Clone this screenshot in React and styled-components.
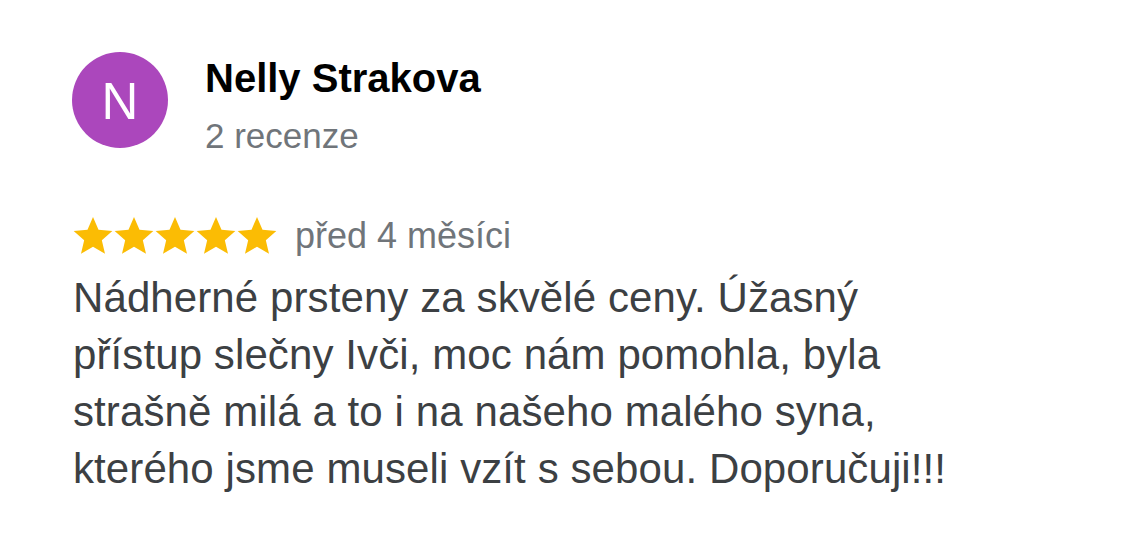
import React from "react";
import styled, { createGlobalStyle } from "styled-components";

const Global = createGlobalStyle`
  html, body { margin: 0; padding: 0; background: #ffffff; }
  body { font-family: "Liberation Sans", Arial, Helvetica, sans-serif; -webkit-font-smoothing: antialiased; }
`;

const Card = styled.div`
  width: 1125px;
  height: 545px;
  box-sizing: border-box;
  padding: 52px 40px 0 72px;
  background: #fff;
  display: flex;
  flex-direction: column;
`;

const Header = styled.div`
  display: flex;
  align-items: flex-start;
  gap: 37px;
`;

const Avatar = styled.div`
  width: 96px;
  height: 96px;
  border-radius: 50%;
  background: #ab47bc;
  color: #fff;
  display: flex;
  align-items: center;
  justify-content: center;
  font-size: 51px;
  font-weight: 400;
  line-height: 1;
  padding-top: 3px;
  box-sizing: border-box;
  flex-shrink: 0;
`;

const Who = styled.div`
  display: flex;
  flex-direction: column;
  padding-top: 2px;
`;

const Name = styled.div`
  font-size: 40px;
  font-weight: 700;
  color: #000;
  line-height: 48px;
`;

const Sub = styled.div`
  font-size: 35px;
  color: #70757a;
  line-height: 48px;
  margin-top: 10px;
`;

const RatingRow = styled.div`
  display: flex;
  align-items: center;
  margin-top: 56px;
  padding-left: 1px;
  height: 40px;
`;

const Stars = styled.div`
  display: flex;
  gap: 1px;
  margin-right: 18px;
`;

const Date = styled.span`
  font-size: 36px;
  color: #70757a;
  line-height: 40px;
`;

const Body = styled.p`
  margin: 13px 0 0 1px;
  font-size: 42px;
  line-height: 57px;
  letter-spacing: 0.1px;
  color: #3c4043;
  width: 950px;
`;

const Star = () => (
  <svg width="40" height="40" viewBox="0 0 24 24">
    <path
      fill="#fbbc04"
      d="M12 0.6l3.3 7.6 8.3 0.8-6.3 5.5 1.9 8.2L12 18.4l-7.2 4.3 1.9-8.2-6.3-5.5 8.3-0.8z"
    />
  </svg>
);

export default function App() {
  return (
    <>
      <Global />
      <Card>
        <Header>
          <Avatar>N</Avatar>
          <Who>
            <Name>Nelly Strakova</Name>
            <Sub>2 recenze</Sub>
          </Who>
        </Header>
        <RatingRow>
          <Stars>
            {[0, 1, 2, 3, 4].map((i) => (
              <Star key={i} />
            ))}
          </Stars>
          <Date>před 4 měsíci</Date>
        </RatingRow>
        <Body>
          Nádherné prsteny za skvělé ceny. Úžasný
          <br />
          přístup slečny Ivči, moc nám pomohla, byla
          <br />
          strašně milá a to i na našeho malého syna,
          <br />
          kterého jsme museli vzít s sebou. Doporučuji!!!
        </Body>
      </Card>
    </>
  );
}
